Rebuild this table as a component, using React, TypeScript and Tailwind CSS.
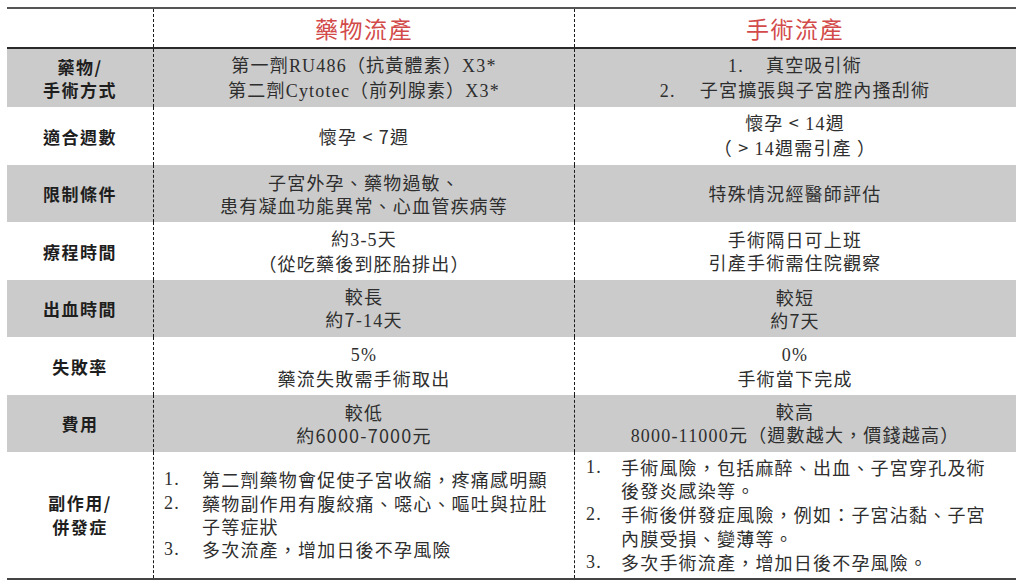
import React from "react";

const S = ({ children }: { children: React.ReactNode }) => (
  <span className="font-['Liberation_Serif','Noto_Sans_CJK_TC',serif]">{children}</span>
);

type RowProps = {
  gray?: boolean;
  h: string;
  label: React.ReactNode;
  mid: React.ReactNode;
  right: React.ReactNode;
};

function Row({ gray, h, label, mid, right }: RowProps) {
  return (
    <div
      className={`grid grid-cols-[146px_421px_441px] ${h} ${
        gray ? "bg-[#cbcbcb]" : "bg-white"
      }`}
    >
      <div className="flex flex-col items-center justify-center text-center text-[17px] font-bold leading-[23px] tracking-[1.5px] text-[#1e1e1e]">
        {label}
      </div>
      <div className="flex flex-col items-center justify-center text-center border-l border-dashed border-[#1a1a1a] leading-[23px]">
        {mid}
      </div>
      <div className="flex flex-col items-center justify-center text-center border-l border-dashed border-[#1a1a1a] leading-[23px]">
        {right}
      </div>
    </div>
  );
}

export default function App() {
  return (
    <div
      lang="zh-TW"
      className="w-[1024px] h-[587px] bg-white pt-[7px] pl-[7px] font-['Noto_Sans_CJK_TC',sans-serif] text-[18px] tracking-[1.2px] text-[#2e2e2e]"
    >
      <div className="w-[1009px] border-t-2 border-t-[#555555] border-b-2 border-b-[#444444]">
        {/* header */}
        <div className="grid grid-cols-[146px_421px_441px] h-[40px] border-b-2 border-b-[#2a2a2a]">
          <div />
          <div className="flex items-center justify-center border-l border-dashed border-[#1a1a1a] text-[23px] tracking-[1.5px] text-[#d24a4a]">
            藥物流產
          </div>
          <div className="flex items-center justify-center border-l border-dashed border-[#1a1a1a] text-[23px] tracking-[1.5px] text-[#d24a4a]">
            手術流產
          </div>
        </div>

        <Row
          gray
          h="h-[58px]"
          label={
            <>
              <span>藥物/</span>
              <span>手術方式</span>
            </>
          }
          mid={
            <>
              <span>
                第一劑<S>RU486</S>（抗黃體素）<S>X3*</S>
              </span>
              <span>
                第二劑<S>Cytotec</S>（前列腺素）<S>X3*</S>
              </span>
            </>
          }
          right={
            <>
              <span>
                <S>1.</S>
                <span className="inline-block w-[22px]" />
                真空吸引術
              </span>
              <span>
                <S>2.</S>
                <span className="inline-block w-[24px]" />
                子宮擴張與子宮腔內搔刮術
              </span>
            </>
          }
        />

        <Row
          h="h-[58px]"
          label={<span>適合週數</span>}
          mid={<span>懷孕 &lt; 7週</span>}
          right={
            <>
              <span>
                懷孕 &lt; <S>14</S>週
              </span>
              <span>
                （ &gt; <S>14</S>週需引產 ）
              </span>
            </>
          }
        />

        <Row
          gray
          h="h-[57px]"
          label={<span>限制條件</span>}
          mid={
            <>
              <span>子宮外孕、藥物過敏、</span>
              <span>患有凝血功能異常、心血管疾病等</span>
            </>
          }
          right={<span>特殊情況經醫師評估</span>}
        />

        <Row
          h="h-[58px]"
          label={<span>療程時間</span>}
          mid={
            <>
              <span>
                約<S>3-5</S>天
              </span>
              <span>（從吃藥後到胚胎排出）</span>
            </>
          }
          right={
            <>
              <span>手術隔日可上班</span>
              <span>引產手術需住院觀察</span>
            </>
          }
        />

        <Row
          gray
          h="h-[57px]"
          label={<span>出血時間</span>}
          mid={
            <>
              <span>較長</span>
              <span>
                約7-<S>14</S>天
              </span>
            </>
          }
          right={
            <>
              <span>較短</span>
              <span>約7天</span>
            </>
          }
        />

        <Row
          h="h-[58px]"
          label={<span>失敗率</span>}
          mid={
            <>
              <span>
                <S>5%</S>
              </span>
              <span>藥流失敗需手術取出</span>
            </>
          }
          right={
            <>
              <span>
                <S>0%</S>
              </span>
              <span>手術當下完成</span>
            </>
          }
        />

        <Row
          gray
          h="h-[57px]"
          label={<span>費用</span>}
          mid={
            <>
              <span>較低</span>
              <span>約6000-7000元</span>
            </>
          }
          right={
            <>
              <span>較高</span>
              <span>
                <S>8000-11000</S>元（週數越大，價錢越高）
              </span>
            </>
          }
        />

        {/* last row */}
        <div className="grid grid-cols-[146px_421px_441px] h-[126px] bg-white">
          <div className="flex flex-col items-center justify-center text-center text-[17px] font-bold leading-[24px] tracking-[1.5px] text-[#1e1e1e]">
            <span>副作用/</span>
            <span>併發症</span>
          </div>
          <div className="flex flex-col justify-center border-l border-dashed border-[#1a1a1a] pl-[10px] leading-[23.3px]">
            <div className="flex">
              <span className="w-[38px] shrink-0 font-['Liberation_Serif',serif]">1.</span>
              <span>第二劑藥物會促使子宮收縮，疼痛感明顯</span>
            </div>
            <div className="flex">
              <span className="w-[38px] shrink-0 font-['Liberation_Serif',serif]">2.</span>
              <span>
                藥物副作用有腹絞痛、噁心、嘔吐與拉肚
                <br />
                子等症狀
              </span>
            </div>
            <div className="flex">
              <span className="w-[38px] shrink-0 font-['Liberation_Serif',serif]">3.</span>
              <span>多次流產，增加日後不孕風險</span>
            </div>
          </div>
          <div className="flex flex-col justify-center border-l border-dashed border-[#1a1a1a] pl-[11px] leading-[23.8px]">
            <div className="flex">
              <span className="w-[35px] shrink-0 font-['Liberation_Serif',serif]">1.</span>
              <span>
                手術風險，包括麻醉、出血、子宮穿孔及術
                <br />
                後發炎感染等。
              </span>
            </div>
            <div className="flex">
              <span className="w-[35px] shrink-0 font-['Liberation_Serif',serif]">2.</span>
              <span>
                手術後併發症風險，例如：子宮沾黏、子宮
                <br />
                內膜受損、變薄等。
              </span>
            </div>
            <div className="flex">
              <span className="w-[35px] shrink-0 font-['Liberation_Serif',serif]">3.</span>
              <span>多次手術流產，增加日後不孕風險。</span>
            </div>
          </div>
        </div>
      </div>
    </div>
  );
}
